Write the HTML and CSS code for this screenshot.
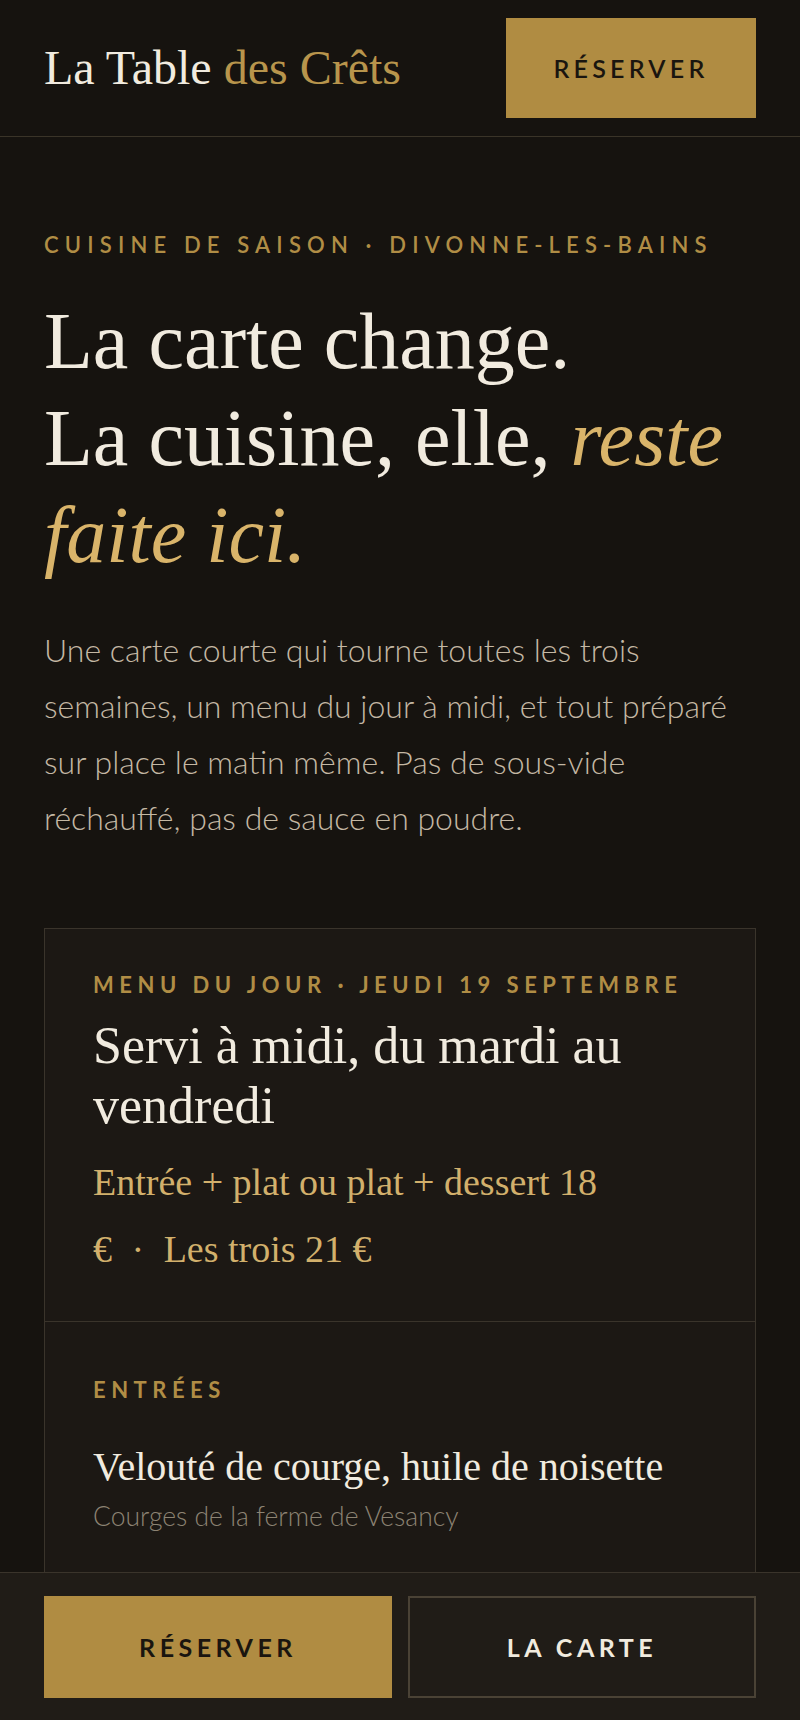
FILE: index.html
```html
<!DOCTYPE html>
<html lang="fr">
<head>
<meta charset="utf-8">
<title>La Table des Crêts</title>
<link rel="stylesheet" href="styles.css">
</head>
<body>
<header class="topbar">
  <a class="logo" href="#">La Table <span class="logo-accent">des Crêts</span></a>
  <a class="btn btn-gold btn-head" href="#">Réserver</a>
</header>

<main class="page">
  <section class="hero">
    <p class="eyebrow">Cuisine de saison · Divonne-les-Bains</p>
    <h1 class="hero-title">La carte change.<br>La cuisine, elle, <em>reste faite ici.</em></h1>
    <p class="lead">Une carte courte qui tourne toutes les trois semaines, un menu du jour à midi, et tout préparé sur place le matin même. Pas de sous-vide réchauffé, pas de sauce en poudre.</p>
  </section>

  <section class="menu-card">
    <div class="menu-day">
      <p class="eyebrow eyebrow-strong">Menu du jour · Jeudi 19 septembre</p>
      <h2 class="menu-title">Servi à midi, du mardi au vendredi</h2>
      <p class="price">Entrée + plat ou plat + dessert 18 € <span class="dot">·</span> Les trois 21 €</p>
    </div>
    <div class="menu-section">
      <p class="eyebrow eyebrow-strong">Entrées</p>
      <ul class="dishes">
        <li class="dish">
          <h3 class="dish-name">Velouté de courge, huile de noisette</h3>
          <p class="dish-note">Courges de la ferme de Vesancy</p>
        </li>
        <li class="dish">
          <h3 class="dish-name">Terrine de campagne, pickles maison</h3>
          <p class="dish-note">Porc du Pays de Gex</p>
        </li>
      </ul>
    </div>
  </section>
</main>

<nav class="cta-bar">
  <a class="btn btn-gold btn-bar" href="#">Réserver</a>
  <a class="btn btn-outline btn-bar" href="#">La carte</a>
</nav>
</body>
</html>
```

FILE: styles.css
```css
* { box-sizing: border-box; }

html, body {
  margin: 0;
  padding: 0;
  background: #16130f;
}

body {
  font-family: "Lato", "Open Sans", sans-serif;
  color: #f1ebdf;
}

a { text-decoration: none; }

/* Header */
.topbar {
  display: flex;
  align-items: center;
  justify-content: space-between;
  padding: 18px 44px;
  border-bottom: 1px solid #3a3428;
  background: #16130f;
}

.logo {
  font-family: "Liberation Serif", serif;
  font-size: 48px;
  line-height: 1;
  color: #f1ebdf;
}

.logo-accent { color: #b8954c; }

.btn {
  display: flex;
  align-items: center;
  justify-content: center;
  text-transform: uppercase;
  font-family: "Lato", sans-serif;
  line-height: 36px;
}

.btn-gold {
  background: #b08c42;
  color: #1a150f;
}

.btn-head {
  width: 250px;
  height: 100px;
  font-size: 25px;
  letter-spacing: 0.17em;
  font-weight: 600;
}

/* Hero */
.page {
  padding: 0 44px 200px;
}

.hero {
  padding-top: 91px;
}

.eyebrow {
  margin: 0;
  font-size: 22px;
  line-height: 33px;
  letter-spacing: 0.25em;
  text-transform: uppercase;
  color: #b08d45;
  font-weight: 600;
}

.hero .eyebrow {
  letter-spacing: 0.28em;
}

.hero-title {
  margin: 32px 0 0;
  font-family: "Liberation Serif", serif;
  font-weight: 400;
  font-size: 80px;
  line-height: 97px;
  color: #f1ebdf;
}

.hero-title em {
  color: #d9b46a;
  font-style: italic;
}

.lead {
  margin: 38px 0 0;
  font-size: 32px;
  line-height: 56px;
  font-weight: 300;
  color: #c4b8a4;
}

/* Menu card */
.menu-card {
  margin-top: 82px;
  border: 1px solid #3a342b;
  background: #1c1814;
}

.menu-day {
  padding: 39px 48px 38px;
  border-bottom: 1px solid #3a342b;
}

.eyebrow-strong {
  font-weight: 700;
}

.menu-title {
  margin: 15px 0 0;
  font-family: "Liberation Serif", serif;
  font-weight: 400;
  font-size: 52px;
  line-height: 60px;
  color: #f1ebdf;
}

.price {
  margin: 13px 0 0;
  max-width: 530px;
  font-family: "Liberation Serif", serif;
  font-size: 38px;
  line-height: 67px;
  color: #d2b06c;
}

.dot {
  margin: 0 10px;
}

.menu-section {
  padding: 51px 48px 60px;
}

.dishes {
  list-style: none;
  margin: 37px 0 0;
  padding: 0;
  display: flex;
  flex-direction: column;
  gap: 60px;
}

.dish-name {
  margin: 0;
  font-family: "Liberation Serif", serif;
  font-weight: 400;
  font-size: 40px;
  line-height: 47px;
  color: #f1ebdf;
}

.dish-note {
  margin: 7px 0 0;
  font-size: 26.5px;
  line-height: 39px;
  font-weight: 300;
  color: #8c8373;
}

/* Bottom bar */
.cta-bar {
  position: fixed;
  left: 0;
  right: 0;
  bottom: 0;
  display: grid;
  grid-template-columns: 1fr 1fr;
  gap: 16px;
  padding: 23px 44px 22px;
  background: #201c17;
  border-top: 1px solid #3a342b;
}

.btn-bar {
  height: 102px;
  font-size: 25px;
  letter-spacing: 0.18em;
  font-weight: 700;
  border: 2px solid transparent;
}

.btn-bar.btn-gold {
  border-color: #b08c42;
}

.btn-outline {
  border-color: #4a4235;
  color: #f1ebdf;
  background: transparent;
}
```
